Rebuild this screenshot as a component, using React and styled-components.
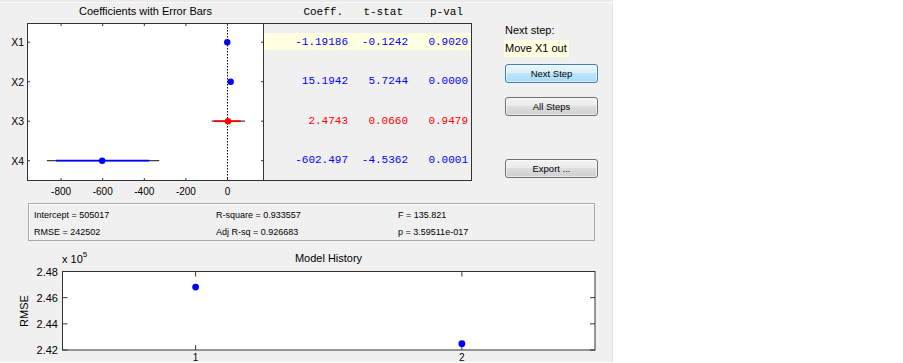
import styled, { createGlobalStyle } from "styled-components";

const GlobalStyle = createGlobalStyle`
  body {
    margin: 0;
    background: #ffffff;
  }
`;

const BLUE = "#0000ff";
const RED = "#ff0000";

const terms = [
  { name: "X1", coeff: "-1.19186", t: "-0.1242", p: "0.9020", value: -1.19, color: BLUE, next: true },
  { name: "X2", coeff: "15.1942", t: "5.7244", p: "0.0000", value: 15.19, color: BLUE },
  { name: "X3", coeff: "2.4743", t: "0.0660", p: "0.9479", value: 2.47, ci: [-65, 63], ext: [-76, 84], color: RED },
  { name: "X4", coeff: "-602.497", t: "-4.5362", p: "0.0001", value: -602.5, ci: [-824, -376], ext: [-868, -328], color: BLUE },
];

const history = [
  { step: 1, rmse: 2.4681 },
  { step: 2, rmse: 2.4248 },
];

// coefficient axes mapping (page pixels)
const cx = (v) => 227.5 + v * 0.208;
const cy = (i) => 42.2 + i * 39.5;

// history axes mapping
const hx = (s) => 62.5 + (s - 0.5) * 266.25;
const hy = (r) => 350 - ((r - 2.42) / 0.06) * 78.5;

export default function App() {
  return (
    <>
      <GlobalStyle />
      <Frame>
        <TopRow>
          <CoefColumn>
            <PlotTitle>Coefficients with Error Bars</PlotTitle>
            <CoefPlot />
          </CoefColumn>
          <TableColumn>
            <TableHeader>
              <HeaderCell>Coeff.</HeaderCell>
              <HeaderCell>t-stat</HeaderCell>
              <HeaderCell>p-val</HeaderCell>
            </TableHeader>
            <TableBox>
              {terms.map((row) => (
                <TableRow key={row.name} $highlight={row.next} $color={row.color}>
                  <span>{row.coeff}</span>
                  <span>{row.t}</span>
                  <span>{row.p}</span>
                </TableRow>
              ))}
            </TableBox>
          </TableColumn>
          <SidePanel>
            <StepLabel>Next step:</StepLabel>
            <StepHint>Move X1 out</StepHint>
            <Button $primary $gap={7}>Next Step</Button>
            <Button $gap={14}>All Steps</Button>
            <Button $gap={43}>Export ...</Button>
          </SidePanel>
        </TopRow>
        <StatsBox>
          <span>Intercept = 505017</span>
          <span>R-square = 0.933557</span>
          <span>F = 135.821</span>
          <span>RMSE = 242502</span>
          <span>Adj R-sq = 0.926683</span>
          <span>p = 3.59511e-017</span>
        </StatsBox>
        <HistoryHeader>
          <Scale>
            x 10<sup>5</sup>
          </Scale>
          <HistoryTitle>Model History</HistoryTitle>
        </HistoryHeader>
        <HistoryPlot />
      </Frame>
    </>
  );
}

function CoefPlot() {
  const xticks = [-800, -600, -400, -200, 0];
  return (
    <PlotSvg width="264" height="177" viewBox="0 23 264 177">
      <rect x="27.5" y="23.5" width="236" height="157" fill="#ffffff" />
      <line x1={cx(0)} y1="24" x2={cx(0)} y2="180" stroke="#000" strokeWidth="1" strokeDasharray="1.5 1.5" />
      {xticks.map((t) => (
        <g key={t}>
          <line x1={cx(t)} y1="23.5" x2={cx(t)} y2="26" stroke="#333" />
          <line x1={cx(t)} y1="180.5" x2={cx(t)} y2="178" stroke="#333" />
          <TickLabel x={cx(t)} y="191" textAnchor="middle" dominantBaseline="central" $size={10}>
            {t}
          </TickLabel>
        </g>
      ))}
      {terms.map((row, i) => (
        <g key={row.name}>
          <line x1="27.5" y1={cy(i)} x2="30" y2={cy(i)} stroke="#333" />
          <line x1="263.5" y1={cy(i)} x2="261" y2={cy(i)} stroke="#333" />
          <TickLabel x="24" y={cy(i)} textAnchor="end" dominantBaseline="central" $size={10.5}>
            {row.name}
          </TickLabel>
          {row.ext && (
            <line x1={cx(row.ext[0])} y1={cy(i)} x2={cx(row.ext[1])} y2={cy(i)} stroke="#404040" strokeWidth="1.2" />
          )}
          {row.ci && (
            <line x1={cx(row.ci[0])} y1={cy(i)} x2={cx(row.ci[1])} y2={cy(i)} stroke={row.color} strokeWidth="1.8" />
          )}
          <circle cx={cx(row.value)} cy={cy(i)} r="3.2" fill={row.color} />
        </g>
      ))}
      <rect x="27.5" y="23.5" width="236" height="157" fill="none" stroke="#333" />
    </PlotSvg>
  );
}

function HistoryPlot() {
  const yticks = [2.48, 2.46, 2.44, 2.42];
  return (
    <PlotSvg width="613" height="94" viewBox="0 267 613 94">
      <rect x="62.5" y="271.5" width="532.5" height="78.5" fill="#ffffff" />
      {yticks.map((t) => (
        <g key={t}>
          <line x1="62.5" y1={hy(t)} x2="67.5" y2={hy(t)} stroke="#333" />
          <line x1="595" y1={hy(t)} x2="590" y2={hy(t)} stroke="#333" />
          <TickLabel x="58" y={hy(t)} textAnchor="end" dominantBaseline="central" $size={11}>
            {t.toFixed(2)}
          </TickLabel>
        </g>
      ))}
      {history.map((h) => (
        <g key={h.step}>
          <line x1={hx(h.step)} y1="271.5" x2={hx(h.step)} y2="276.5" stroke="#333" />
          <line x1={hx(h.step)} y1="350" x2={hx(h.step)} y2="345" stroke="#333" />
          <TickLabel x={hx(h.step)} y="360.5" textAnchor="middle" $size={10}>
            {h.step}
          </TickLabel>
          <circle cx={hx(h.step)} cy={hy(h.rmse)} r="3.4" fill={BLUE} />
        </g>
      ))}
      <TickLabel x="24" y="311" textAnchor="middle" dominantBaseline="central" transform="rotate(-90 24 311)" $size={11}>
        RMSE
      </TickLabel>
      <rect x="62.5" y="271.5" width="532.5" height="78.5" fill="none" stroke="#333" />
    </PlotSvg>
  );
}

const Frame = styled.div`
  width: 613px;
  height: 362px;
  overflow: hidden;
  background: #f0f0f0;
  box-shadow: inset 0 2px 0 #ebebeb, inset 0 3px 0 #fafafa, inset -1px 0 0 #e2e2e2;
  font-family: "Liberation Sans", Arial, sans-serif;
  color: #000;
`;

const TopRow = styled.div`
  display: flex;
  height: 203px;
`;

const CoefColumn = styled.div`
  width: 264px;
  display: flex;
  flex-direction: column;
`;

const PlotTitle = styled.div`
  height: 23px;
  padding-left: 27px;
  font-size: 11px;
  line-height: 22px;
  text-align: center;
`;

const PlotSvg = styled.svg`
  display: block;
  overflow: visible;
`;

const TickLabel = styled.text`
  font-family: "Liberation Sans", Arial, sans-serif;
  font-size: ${(p) => p.$size}px;
  fill: #000;
`;

const TableColumn = styled.div`
  width: 208px;
  display: flex;
  flex-direction: column;
`;

const TableHeader = styled.div`
  height: 23px;
  display: grid;
  grid-template-columns: 84px 60px 60px;
  align-items: center;
  font-family: "Liberation Mono", "Courier New", monospace;
  font-size: 11px;
`;

const HeaderCell = styled.span`
  text-align: right;
  padding-right: 5px;
`;

const TableBox = styled.div`
  box-sizing: border-box;
  height: 158px;
  border: 1px solid #333;
  border-left: none;
  padding-top: 9px;
  display: flex;
  flex-direction: column;
  gap: 22.5px;
  background: #f0f0f0;
`;

const TableRow = styled.div`
  height: 17px;
  display: grid;
  grid-template-columns: 84px 60px 60px;
  align-items: center;
  background: ${(p) => (p.$highlight ? "#ffffe1" : "transparent")};
  color: ${(p) => p.$color};
  font-family: "Liberation Mono", "Courier New", monospace;
  font-size: 11px;

  & > span {
    text-align: right;
  }
`;

const SidePanel = styled.div`
  margin-left: 33px;
  width: 94px;
  display: flex;
  flex-direction: column;
  align-items: flex-start;
  font-size: 11px;
`;

const StepLabel = styled.div`
  margin-top: 22px;
  line-height: 17px;
`;

const StepHint = styled.div`
  margin-top: 1px;
  margin-left: -1px;
  padding: 0 2px 0 1px;
  line-height: 17px;
  background: #ffffe1;
`;

const Button = styled.div`
  box-sizing: border-box;
  margin-top: ${(p) => p.$gap}px;
  width: 93px;
  height: 19px;
  border: 1px solid ${(p) => (p.$primary ? "#3c7fb1" : "#707070")};
  border-radius: 3px;
  background: ${(p) =>
    p.$primary
      ? "linear-gradient(#eaf6fd 0%, #d9f0fc 45%, #bee6fd 50%, #a7d9f5 100%)"
      : "linear-gradient(#f2f2f2 0%, #ebebeb 45%, #dddddd 50%, #cfcfcf 100%)"};
  box-shadow: inset 0 0 0 1px rgba(255, 255, 255, 0.6);
  font-size: 9.5px;
  display: flex;
  align-items: center;
  justify-content: center;
`;

const StatsBox = styled.div`
  box-sizing: border-box;
  margin-left: 28px;
  width: 567px;
  height: 38px;
  border: 1px solid #a8a8a8;
  box-shadow: inset 1px 1px 0 #ffffff;
  padding: 2px 0 0 5px;
  display: grid;
  grid-template-columns: 182px 182px 1fr;
  grid-auto-rows: 17px;
  align-items: center;
  font-size: 9px;
`;

const HistoryHeader = styled.div`
  position: relative;
  height: 26px;
  margin-left: 62px;
  width: 533px;
  display: flex;
  align-items: flex-end;
  justify-content: center;
`;

const Scale = styled.div`
  position: absolute;
  left: 0;
  bottom: 2px;
  font-size: 11px;

  & sup {
    font-size: 8px;
    vertical-align: 6px;
  }
`;

const HistoryTitle = styled.div`
  font-size: 11px;
  line-height: 13px;
  margin-bottom: 2px;
`;
